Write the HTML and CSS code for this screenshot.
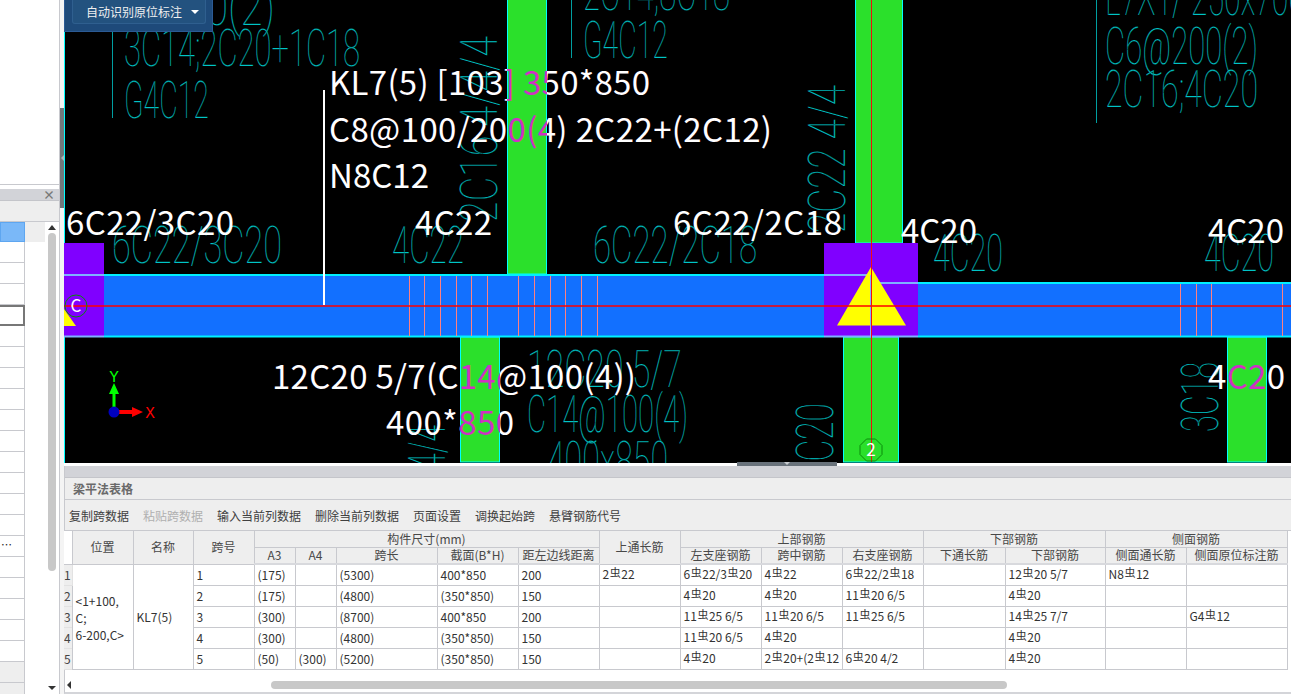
FILE: index.html
```html
<!DOCTYPE html>
<html lang="zh">
<head>
<meta charset="utf-8">
<title>梁平法表格</title>
<link rel="stylesheet" href="styles.css">
</head>
<body>
<div class="app">
  <aside class="side">
    <div class="side-top"></div>
    <div class="side-panel">
      <div class="bar-grey side-bar"><span class="close">×</span></div>
      <div class="side-head"></div>
      <div class="side-body">
        <div class="list">
          <div class="row first"><span class="cell sel"></span></div>
          <div class="row"><span class="cell"></span></div>
          <div class="row"><span class="cell"></span></div>
          <div class="row"><span class="cell"></span></div>
          <div class="row"><span class="cell active"></span></div>
          <div class="row"><span class="cell"></span></div>
          <div class="row"><span class="cell"></span></div>
          <div class="row"><span class="cell"></span></div>
          <div class="row"><span class="cell"></span></div>
          <div class="row"><span class="cell"></span></div>
          <div class="row"><span class="cell"></span></div>
          <div class="row"><span class="cell"></span></div>
          <div class="row"><span class="cell"></span></div>
          <div class="row"><span class="cell"></span></div>
          <div class="row"><span class="cell"></span></div>
          <div class="row"><span class="cell dots">…</span></div>
          <div class="row"><span class="cell"></span></div>
          <div class="row"><span class="cell"></span></div>
          <div class="row"><span class="cell"></span></div>
          <div class="row"><span class="cell"></span></div>
          <div class="row"><span class="cell"></span></div>
          <div class="row tail"><span class="cell"></span></div>
          <div class="tail-end"></div>
        </div>
        <div class="vscroll">
          <span class="arrow-up"></span>
          <span class="vthumb"></span>
          <span class="arrow-down"></span>
        </div>
      </div>
    </div>
  </aside>
  <div class="gutter">
    <span class="gutter-thumb"><span class="arrow-left"></span></span>
  </div>
  <main class="main">
    <div class="toolbox">
      <button class="tool-btn"><span>自动识别原位标注</span><span class="caret"></span></button>
    </div>
    <span class="splitter"><span class="splitter-caret"></span></span>
    <svg class="canvas" viewBox="64 0 1227 463" width="1227" height="463">
      <defs>
        <linearGradient id="g1" gradientUnits="userSpaceOnUse" x1="0" y1="0" x2="1291" y2="0">
          <stop offset="0.3927" stop-color="#fff"/><stop offset="0.3927" stop-color="#d030c4"/>
          <stop offset="0.4237" stop-color="#d030c4"/><stop offset="0.4237" stop-color="#fff"/>
        </linearGradient>
        <linearGradient id="g2" gradientUnits="userSpaceOnUse" x1="0" y1="0" x2="1291" y2="0">
          <stop offset="0.3563" stop-color="#fff"/><stop offset="0.3563" stop-color="#d030c4"/>
          <stop offset="0.3873" stop-color="#d030c4"/><stop offset="0.3873" stop-color="#fff"/>
        </linearGradient>
        <linearGradient id="g3" gradientUnits="userSpaceOnUse" x1="0" y1="0" x2="1291" y2="0">
          <stop offset="0.9504" stop-color="#fff"/><stop offset="0.9504" stop-color="#d030c4"/>
          <stop offset="0.9814" stop-color="#d030c4"/><stop offset="0.9814" stop-color="#fff"/>
        </linearGradient>
      </defs>
      <rect x="64" y="0" width="1227" height="463" fill="#000"/>
      <line class="cy" x1="64.5" y1="0" x2="64.5" y2="463"/>

      <!-- columns -->
      <rect class="col" x="507.5" y="-2" width="39" height="276"/>
      <rect class="col" x="855.5" y="-2" width="47" height="245"/>
      <rect class="col" x="843.5" y="337" width="55" height="125"/>
      <rect class="col" x="460.5" y="337" width="39" height="125"/>
      <rect class="col" x="1227.5" y="337" width="39" height="125"/>

      <!-- teal CAD annotation -->
      <g class="cad">
        <text x="161" y="25" textLength="114" lengthAdjust="spacingAndGlyphs">200(2)</text>
        <text x="124" y="66" textLength="236" lengthAdjust="spacingAndGlyphs">3C14;2C20+1C18</text>
        <text x="124" y="118" textLength="85" lengthAdjust="spacingAndGlyphs">G4C12</text>
        <text x="583" y="10" textLength="147" lengthAdjust="spacingAndGlyphs">2C14;8C18</text>
        <text x="583" y="58" textLength="85" lengthAdjust="spacingAndGlyphs">G4C12</text>
        <text x="1105" y="15" textLength="200" lengthAdjust="spacingAndGlyphs">L7X1/ 250x700</text>
        <text x="1105" y="64" textLength="153" lengthAdjust="spacingAndGlyphs">C6@200(2)</text>
        <text x="1105" y="107" textLength="153" lengthAdjust="spacingAndGlyphs">2C16;4C20</text>
        <text x="112" y="263" textLength="170" lengthAdjust="spacingAndGlyphs">6C22/3C20</text>
        <text x="392" y="263" textLength="72" lengthAdjust="spacingAndGlyphs">4C22</text>
        <text x="593" y="263" textLength="164" lengthAdjust="spacingAndGlyphs">6C22/2C18</text>
        <text x="933" y="271" textLength="70" lengthAdjust="spacingAndGlyphs">4C20</text>
        <text x="1204" y="271" textLength="70" lengthAdjust="spacingAndGlyphs">4C20</text>
        <text x="527" y="387" textLength="155" lengthAdjust="spacingAndGlyphs">12C20 5/7</text>
        <text x="527" y="432" textLength="161" lengthAdjust="spacingAndGlyphs">C14@100(4)</text>
        <text x="547" y="478" textLength="121" lengthAdjust="spacingAndGlyphs">400x850</text>
        <text x="497" y="222" textLength="186" lengthAdjust="spacingAndGlyphs" transform="rotate(-90 497 222)">2C16 4/4/4</text>
        <text x="845" y="233" textLength="148" lengthAdjust="spacingAndGlyphs" transform="rotate(-90 845 233)">2C22 4/4</text>
        <text x="833" y="480" textLength="77" lengthAdjust="spacingAndGlyphs" transform="rotate(-90 833 480)">1C20</text>
        <text x="1218" y="432" textLength="70" lengthAdjust="spacingAndGlyphs" transform="rotate(-90 1218 432)">3C18</text>
        <text x="445" y="470" textLength="45" lengthAdjust="spacingAndGlyphs" transform="rotate(-90 445 470)">4/4</text>
      </g>
      <line class="lead" x1="112.5" y1="32" x2="112.5" y2="118"/>
      <line class="lead" x1="571.5" y1="0" x2="571.5" y2="58"/>
      <line class="lead" x1="1096.5" y1="0" x2="1096.5" y2="123"/>

      <!-- beam -->
      <rect class="beam" x="64" y="275" width="807" height="61"/>
      <rect class="beam" x="871" y="283" width="420" height="53"/>
      <rect class="pier" x="64" y="243" width="40" height="94"/>
      <rect class="pier" x="824" y="243" width="94" height="93"/>
      <line class="cy2" x1="104" y1="275" x2="824" y2="275"/>
      <line class="cy2" x1="918" y1="283" x2="1291" y2="283"/>
      <line class="cy2" x1="104" y1="336.5" x2="824" y2="336.5"/>
      <line class="cy2" x1="918" y1="336.5" x2="1291" y2="336.5"/>
      <line class="soft" x1="64" y1="275" x2="104" y2="275"/>
      <line class="soft" x1="64" y1="336.5" x2="104" y2="336.5"/>
      <line class="soft" x1="824" y1="275" x2="871" y2="275"/>
      <line class="soft" x1="871" y1="283" x2="918" y2="283"/>
      <line class="soft" x1="824" y1="336.5" x2="918" y2="336.5"/>
      <polygon class="yellow" points="871,267 906,325.5 837,325.5"/>
      <polygon class="yellow" points="64,309 76,326 64,326"/>
      <line class="soft" x1="871" y1="275" x2="871" y2="337"/>

      <!-- stirrups -->
      <g class="stir">
        <line x1="409.5" y1="276" x2="409.5" y2="336"/><line x1="424.5" y1="276" x2="424.5" y2="336"/>
        <line x1="440.5" y1="276" x2="440.5" y2="336"/><line x1="456.5" y1="276" x2="456.5" y2="336"/>
        <line x1="471.5" y1="276" x2="471.5" y2="336"/><line x1="487.5" y1="276" x2="487.5" y2="336"/>
        <line x1="518.5" y1="276" x2="518.5" y2="336"/><line x1="534.5" y1="276" x2="534.5" y2="336"/>
        <line x1="550.5" y1="276" x2="550.5" y2="336"/><line x1="565.5" y1="276" x2="565.5" y2="336"/>
        <line x1="581.5" y1="276" x2="581.5" y2="336"/><line x1="597.5" y1="276" x2="597.5" y2="336"/>
        <line x1="1180.5" y1="284" x2="1180.5" y2="336"/><line x1="1196.5" y1="284" x2="1196.5" y2="336"/>
        <line x1="1211.5" y1="284" x2="1211.5" y2="336"/><line x1="1282.5" y1="284" x2="1282.5" y2="336"/>
      </g>

      <!-- axes -->
      <line class="axis-h" x1="64" y1="306" x2="1291" y2="306"/>
      <line class="axis-v" x1="871.5" y1="0" x2="871.5" y2="462"/>
      <line class="leader" x1="324" y1="90" x2="324" y2="305"/>

      <circle class="bubble" cx="76" cy="306" r="11"/>
      <polygon class="bubble" points="866.5,439 875.5,439 882,445.5 882,454.5 875.5,461 866.5,461 860,454.5 860,445.5"/>
      <text class="bubble-t" x="76" y="312">C</text>
      <text class="bubble-t" x="871" y="456">2</text>

      <!-- white labels -->
      <g class="lab">
        <text x="329" y="95" fill="url(#g1)" textLength="321">KL7(5) [103] 350*850</text>
        <text x="329" y="142" fill="url(#g1)" textLength="443">C8@100/200(4) 2C22+(2C12)</text>
        <text x="329" y="188" textLength="100">N8C12</text>
        <text x="66" y="235" textLength="168">6C22/3C20</text>
        <text x="415" y="235" textLength="77">4C22</text>
        <text x="673" y="235" textLength="169">6C22/2C18</text>
        <text x="901" y="243" textLength="76">4C20</text>
        <text x="1208" y="243" textLength="76">4C20</text>
        <text x="272" y="389" fill="url(#g2)" textLength="364">12C20 5/7(C14@100(4))</text>
        <text x="386" y="435" fill="url(#g2)" textLength="128">400*850</text>
        <text x="1208" y="389" fill="url(#g3)" textLength="77">4C20</text>
      </g>

      <!-- UCS -->
      <rect class="ucs-g" x="112.5" y="392" width="3" height="20"/>
      <polygon class="ucs-g" points="114,383 119,394 109,394"/>
      <rect class="ucs-r" x="114" y="410" width="20" height="4"/>
      <polygon class="ucs-r" points="132,407 143,412 132,417"/>
      <circle class="ucs-o" cx="114" cy="412" r="5.5"/>
      <text class="ucs-tg" x="114" y="382">Y</text>
      <text class="ucs-tr" x="150" y="418">X</text>
    </svg>

    <section class="panel">
      <div class="bar-grey"></div>
      <div class="panel-title">梁平法表格</div>
      <div class="panel-tools">
        <span>复制跨数据</span>
        <span class="off">粘贴跨数据</span>
        <span>输入当前列数据</span>
        <span>删除当前列数据</span>
        <span>页面设置</span>
        <span>调换起始跨</span>
        <span>悬臂钢筋代号</span>
      </div>
      <div class="table-wrap">
        <table class="grid">
          <colgroup>
            <col class="c8"><col class="c61"><col class="c60"><col class="c61">
            <col class="c41"><col class="c41"><col class="c101"><col class="c81">
            <col class="c81"><col class="c81"><col class="c81"><col class="c81">
            <col class="c81"><col class="c82"><col class="c100"><col class="c81"><col class="c101">
          </colgroup>
          <thead>
            <tr class="h1">
              <th class="rn-h" rowspan="2"></th>
              <th rowspan="2">位置</th>
              <th rowspan="2">名称</th>
              <th rowspan="2">跨号</th>
              <th colspan="5">构件尺寸(mm)</th>
              <th rowspan="2">上通长筋</th>
              <th colspan="3">上部钢筋</th>
              <th colspan="2">下部钢筋</th>
              <th colspan="2">侧面钢筋</th>
            </tr>
            <tr class="h2">
              <th>A3</th><th>A4</th><th>跨长</th><th>截面(B*H)</th><th>距左边线距离</th>
              <th>左支座钢筋</th><th>跨中钢筋</th><th>右支座钢筋</th>
              <th>下通长筋</th><th>下部钢筋</th>
              <th>侧面通长筋</th><th>侧面原位标注筋</th>
            </tr>
          </thead>
          <tbody>
            <tr>
              <td class="rn">1</td>
              <td class="pos" rowspan="5">&lt;1+100,<br>C;<br>6-200,C&gt;</td>
              <td class="name" rowspan="5">KL7(5)</td>
              <td>1</td><td>(175)</td><td></td><td>(5300)</td><td>400*850</td><td>200</td>
              <td class="r">2<i>虫</i>22</td>
              <td class="r">6<i>虫</i>22/3<i>虫</i>20</td>
              <td class="r">4<i>虫</i>22</td>
              <td class="r">6<i>虫</i>22/2<i>虫</i>18</td>
              <td></td>
              <td class="r">12<i>虫</i>20 5/7</td>
              <td class="r">N8<i>虫</i>12</td>
              <td></td>
            </tr>
            <tr>
              <td class="rn">2</td>
              <td>2</td><td>(175)</td><td></td><td>(4800)</td><td>(350*850)</td><td>150</td>
              <td></td>
              <td class="r">4<i>虫</i>20</td>
              <td class="r">4<i>虫</i>20</td>
              <td class="r">11<i>虫</i>20 6/5</td>
              <td></td>
              <td class="r">4<i>虫</i>20</td>
              <td></td><td></td>
            </tr>
            <tr>
              <td class="rn">3</td>
              <td>3</td><td>(300)</td><td></td><td>(8700)</td><td>400*850</td><td>200</td>
              <td></td>
              <td class="r">11<i>虫</i>25 6/5</td>
              <td class="r">11<i>虫</i>20 6/5</td>
              <td class="r">11<i>虫</i>25 6/5</td>
              <td></td>
              <td class="r">14<i>虫</i>25 7/7</td>
              <td></td>
              <td class="r">G4<i>虫</i>12</td>
            </tr>
            <tr>
              <td class="rn">4</td>
              <td>4</td><td>(300)</td><td></td><td>(4800)</td><td>(350*850)</td><td>150</td>
              <td></td>
              <td class="r">11<i>虫</i>20 6/5</td>
              <td class="r">4<i>虫</i>20</td>
              <td></td><td></td>
              <td class="r">4<i>虫</i>20</td>
              <td></td><td></td>
            </tr>
            <tr>
              <td class="rn">5</td>
              <td>5</td><td>(50)</td><td>(300)</td><td>(5200)</td><td>(350*850)</td><td>150</td>
              <td></td>
              <td class="r">4<i>虫</i>20</td>
              <td class="r">2<i>虫</i>20+(2<i>虫</i>12</td>
              <td class="r">6<i>虫</i>20 4/2</td>
              <td></td>
              <td class="r">4<i>虫</i>20</td>
              <td></td><td></td>
            </tr>
          </tbody>
        </table>
      </div>
      <div class="hscroll">
        <span class="arrow-left-d"></span>
        <span class="hthumb"></span>
      </div>
    </section>
  </main>
</div>
</body>
</html>
```
FILE: styles.css
```css
* { box-sizing: border-box; }
html, body { margin: 0; padding: 0; }
body {
  width: 1291px;
  height: 694px;
  overflow: hidden;
  background: #fff;
  font-family: "Noto Sans CJK SC", "Noto Sans", sans-serif;
  font-size: 12px;
  color: #3c3c3c;
}
.app { display: flex; width: 1291px; height: 694px; }

/* left side */
.side { width: 60px; flex: none; display: flex; flex-direction: column; border-right: 1px solid #c8c9ce; }
.side-top { height: 189px; flex: none; background: linear-gradient(#fff 184px, #c8c9ce 184px, #c8c9ce 185px, #fff 185px); }
.side-panel { flex: 1; display: flex; flex-direction: column; min-height: 0; }
.bar-grey { height: 12px; flex: none; background: #d2d3d8; border-bottom: 1px solid #c4c5ca; }
.side-bar { display: flex; justify-content: flex-end; align-items: center; padding-right: 4px; }
.close { font-size: 12px; line-height: 11px; color: #777; font-weight: 700; }
.side-head { height: 21px; flex: none; background: #eee; border-bottom: 1px solid #c8c9ce; }
.side-body { flex: 1; display: flex; min-height: 0; }
.list { width: 45px; flex: none; display: flex; flex-direction: column; }
.row { height: 21px; flex: none; display: flex; }
.row.first { height: 20px; background: #eee; }
.cell { width: 25px; height: 21px; border-right: 1px solid #c8c9ce; border-bottom: 1px solid #c8c9ce; display: block; }
.row.first .cell { height: 20px; }
.cell.sel { background: #7ab8f8; border: 1px solid #5ea6f0; }
.cell.active { border: 2px solid #777; border-left: 0; }
.cell.dots { line-height: 17px; font-size: 11px; padding-left: 1px; color: #222; }
.row.tail .cell { background: #eee; }
.tail-end { flex: 1; width: 25px; background: #eee; border-right: 1px solid #c8c9ce; }
.vscroll { flex: 1; display: flex; flex-direction: column; align-items: center; padding: 2px 0 4px; }
.arrow-up { width: 0; height: 0; border: 4px solid transparent; border-top: 0; border-bottom: 5px solid #333; margin-top: 1px; }
.vthumb { width: 8px; height: 338px; margin-top: 3px; background: #c8c8c8; border-radius: 4px; }
.arrow-down { width: 0; height: 0; margin-top: auto; border: 4px solid transparent; border-bottom: 0; border-top: 4px solid #333; }

.gutter { width: 4px; flex: none; padding-top: 108px; background: #f4f4f4; }
.gutter-thumb { width: 4px; height: 100px; display: flex; align-items: center; justify-content: center; background: #71787c; }
.arrow-left { width: 0; height: 0; border: 3px solid transparent; border-left: 0; border-right: 3px solid #b0b4b8; }

/* main */
.main { position: relative; flex: 1; min-width: 0; display: flex; flex-direction: column; }
.canvas { display: block; flex: none; overflow: hidden; }
.toolbox { position: absolute; left: 0; top: 0; width: 149px; height: 32px; padding-left: 7px; background: #1e4a7a; border: 1px solid #2b5a94; border-top: 0; }
.tool-btn { display: flex; align-items: center; width: 134px; height: 24px; margin: 0; padding: 0 6px 0 13px; background: #23527f; border: 1px solid #2f5f8f; border-top: 0; border-radius: 0 0 3px 3px; color: #f0f0f0; font: 12px "Noto Sans CJK SC", sans-serif; }
.caret { width: 0; height: 0; margin-left: auto; border: 4px solid transparent; border-bottom: 0; border-top: 4px solid #fff; }
.splitter { position: absolute; left: 673px; top: 462px; width: 100px; height: 4px; display: flex; justify-content: center; background: #69727b; }
.splitter-caret { width: 0; height: 0; border: 3px solid transparent; border-bottom: 0; border-top: 3px solid #c8cbd0; }

/* canvas */
.cy { stroke: #00ffff; stroke-width: 1; }
.col { fill: #2be02b; stroke: #00ffff; stroke-width: 1; }
.cad text { font-family: Roboto, sans-serif; font-weight: 100; font-size: 52px; fill: #00c4c6; stroke: #000; stroke-width: 0.25px; }
.lead { stroke: #009ea0; stroke-width: 1; }
.beam { fill: #1270ff; }
.pier { fill: #8000ff; }
.cy2 { stroke: #00f0ff; stroke-width: 2; }
.soft { stroke: #7fb0ff; stroke-width: 2; }
.yellow { fill: #ffff00; }
.stir line { stroke: #ff8080; stroke-width: 1; }
.axis-h { stroke: #ff0000; stroke-width: 1.5; }
.axis-v { stroke: #f01010; stroke-width: 1; }
.leader { stroke: #fff; stroke-width: 2; }
.bubble { fill: none; stroke: #0a8a0a; stroke-width: 1; }
.bubble-t { fill: #fff; font-size: 17px; font-family: "Noto Sans CJK SC", sans-serif; text-anchor: middle; }
.lab { fill: #fff; }
.lab text { font-family: "Noto Sans CJK SC", sans-serif; font-size: 33px; }
.ucs-g { fill: #00ff00; }
.ucs-r { fill: #ff0000; }
.ucs-o { fill: #0000c0; }
.ucs-tg, .ucs-tr { font-family: "Liberation Mono", monospace; font-size: 16px; text-anchor: middle; }
.ucs-tg { fill: #00ff00; }
.ucs-tr { fill: #ff0000; }

/* bottom panel */
.panel { flex: 1; min-height: 0; margin-top: 3px; display: flex; flex-direction: column; border-left: 1px solid #c8c9ce; border-bottom: 2px solid #d4d5d9; }
.panel-title { height: 22px; flex: none; padding-left: 8px; background: #eee; border-bottom: 1px solid #c8c9ce; line-height: 22px; font-weight: 700; color: #6a6a6a; }
.panel-tools { height: 30px; flex: none; display: flex; gap: 14px; align-items: center; padding-left: 4px; background: #eee; color: #404040; }
.panel-tools .off { color: #b0b0b0; }
.table-wrap { flex: none; height: 139px; margin-left: -1px; padding-right: 4px; background: #fff; border-top: 1px solid #c8c9ce; }
.grid { border-collapse: collapse; table-layout: fixed; width: 1223px; }
.c8 { width: 8px; } .c41 { width: 41px; } .c60 { width: 60px; } .c61 { width: 61px; }
.c81 { width: 81px; } .c82 { width: 82px; } .c100 { width: 100px; } .c101 { width: 101px; }
.grid th { padding: 0; background: #eee; border: 1px solid #c8c9ce; font-weight: 400; font-size: 12px; line-height: 14px; color: #484848; overflow: hidden; white-space: nowrap; }
.grid thead tr:first-child th { border-top: 0; }
.grid .h1 { height: 16px; }
.grid .h2 { height: 17px; }
.grid .h2 th { border-bottom: 2px solid #d8d9dd; }
.grid .rn-h { background: #fff; border-left: 0; }
.grid tbody tr { height: 21px; }
.grid td { padding: 0 0 0 3px; border: 1px solid #c8c9ce; font-size: 12px; line-height: 14px; color: #333; overflow: hidden; white-space: nowrap; }
.grid td.rn { padding: 0; background: #eee; border-left: 0; border-color: #e2e2e2; color: #444; }
.grid td.pos { line-height: 17px; padding-top: 2px; }
.grid td.r { padding-bottom: 2px; }
.grid i { display: inline-block; width: 12px; font-style: normal; font-size: 11px; line-height: 11px; text-align: center; vertical-align: 2px; }
.hscroll { flex: none; height: 8px; margin-top: 12px; display: flex; align-items: center; padding-left: 2px; }
.arrow-left-d { width: 0; height: 0; flex: none; border: 4px solid transparent; border-left: 0; border-right: 4px solid #333; }
.hthumb { width: 736px; height: 8px; margin-left: 200px; background: #c8c8c8; border-radius: 4px; }
```
